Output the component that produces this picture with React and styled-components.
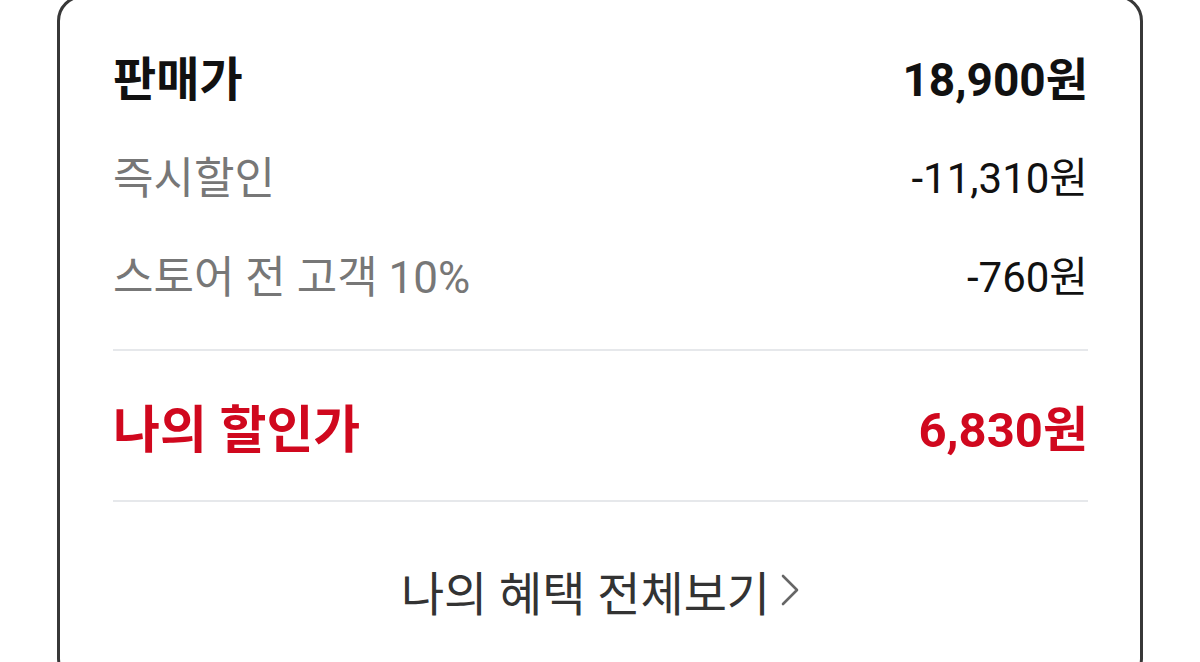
import React from "react";
import styled, { createGlobalStyle } from "styled-components";

const Global = createGlobalStyle`
  html, body {
    margin: 0;
    padding: 0;
    background: #fff;
    overflow: hidden;
  }
  body {
    font-family: Roboto, "Noto Sans CJK KR", sans-serif;
  }
`;

const Card = styled.div`
  box-sizing: border-box;
  width: 1086px;
  margin: -5px 0 0 57px;
  border: 3px solid #383838;
  border-radius: 26px;
  padding: 28px 52px 0 53px;
  height: 690px;
`;

const Row = styled.div`
  display: flex;
  align-items: center;
  justify-content: space-between;
  height: ${(p) => p.h || 99}px;
`;

const Label = styled.span`
  font-size: ${(p) => p.size || 44}px;
  font-weight: ${(p) => (p.strong ? 700 : 400)};
  color: ${(p) => p.color || "#777"};
`;

const Value = styled.span`
  font-size: ${(p) => p.size || 42}px;
  font-weight: ${(p) => (p.strong ? 700 : 400)};
  color: ${(p) => p.color || "#111"};
`;

const Divider = styled.div`
  height: 2px;
  background: #e6e8eb;
  margin-top: ${(p) => p.mt || 0}px;
`;

const LinkRow = styled.div`
  display: flex;
  align-items: center;
  justify-content: center;
  gap: 10px;
  height: 176px;
  font-size: 47px;
  color: #333;
`;

const Chevron = () => (
  <svg width="20" height="34" viewBox="0 0 20 34" fill="none">
    <polyline points="3,3 17,17 3,31" stroke="#666" strokeWidth="2.6" strokeLinejoin="round" strokeLinecap="round" />
  </svg>
);

export default function App() {
  return (
    <>
      <Global />
      <Card>
        <Row>
          <Label strong size={47} color="#111">판매가</Label>
          <Value strong size={46}>18,900원</Value>
        </Row>
        <Row>
          <Label>즉시할인</Label>
          <Value>-11,310원</Value>
        </Row>
        <Row>
          <Label>스토어 전 고객 10%</Label>
          <Value>-760원</Value>
        </Row>
        <Divider mt={26} />
        <Row h={149}>
          <Label strong size={51} color="#d0081e">나의 할인가</Label>
          <Value strong size={49} color="#d0081e">6,830원</Value>
        </Row>
        <Divider />
        <LinkRow>
          나의 혜택 전체보기
          <Chevron />
        </LinkRow>
      </Card>
    </>
  );
}
